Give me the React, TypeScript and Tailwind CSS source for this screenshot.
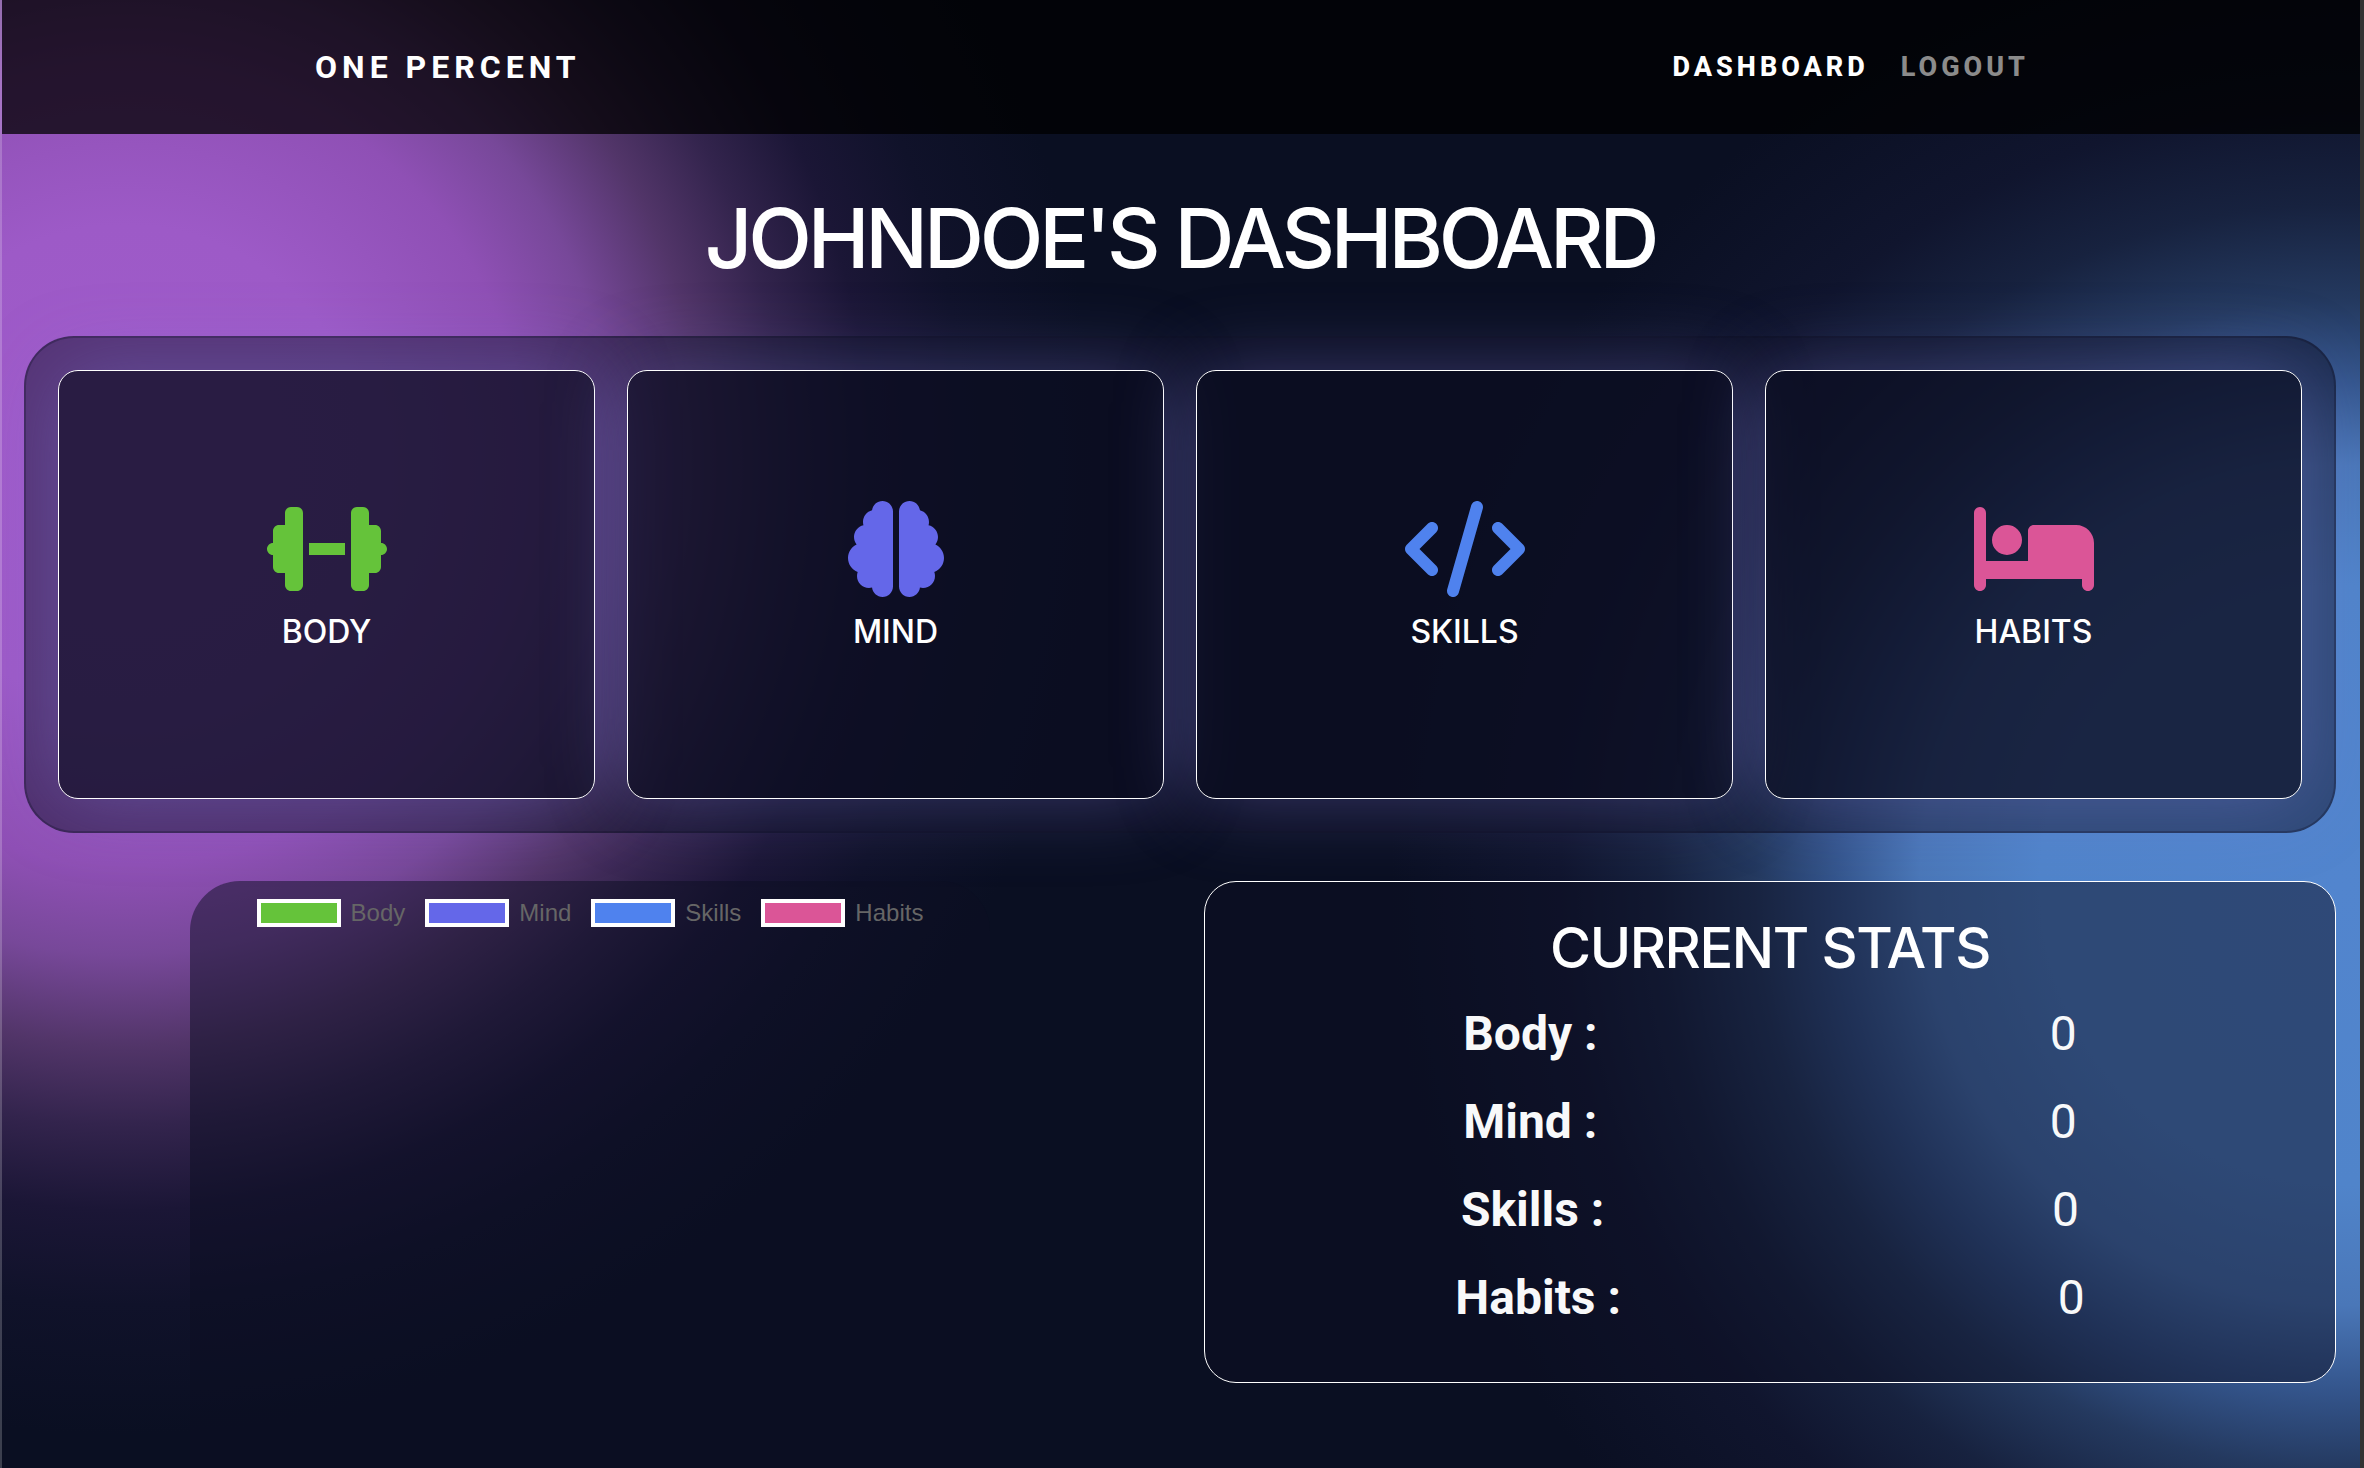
import { FaDumbbell, FaBrain, FaCode, FaBed } from "react-icons/fa6";
import type { IconType } from "react-icons";

type Area = { name: string; Icon: IconType; text: string; fill: string; value: number };

const areas: Area[] = [
  { name: "Body", Icon: FaDumbbell, text: "text-[#65c33a]", fill: "bg-[#65c33a]", value: 0 },
  { name: "Mind", Icon: FaBrain, text: "text-[#6467e9]", fill: "bg-[#6467e9]", value: 0 },
  { name: "Skills", Icon: FaCode, text: "text-[#4f82ee]", fill: "bg-[#4f82ee]", value: 0 },
  { name: "Habits", Icon: FaBed, text: "text-[#db5597]", fill: "bg-[#db5597]", value: 0 },
];

function Navbar() {
  return (
    <header className="bg-black/75">
      <nav className="mx-auto flex h-[134px] w-[1736px] max-w-full items-center justify-between pr-5 pl-0.5 font-['Roboto']">
        <a href="#home" className="text-[32px] font-bold tracking-[5px] text-white">
          ONE PERCENT
        </a>
        <div className="flex gap-8 text-[27px] font-extrabold tracking-[4px]">
          <a href="#dashboard" className="text-white">
            DASHBOARD
          </a>
          <a href="#logout" className="text-[#8b8b8b]">
            LOGOUT
          </a>
        </div>
      </nav>
    </header>
  );
}

function AreaCard({ area }: { area: Area }) {
  const { Icon } = area;
  return (
    <button
      type="button"
      className="flex h-[429px] flex-col items-center justify-center gap-2 rounded-[20px] border border-white bg-[#0c0d22]/60 pb-2.5 shadow-[0_0_80px_rgba(130,125,220,0.38)]"
    >
      <Icon aria-hidden="true" className={`h-24 w-30 ${area.text}`} />
      <span className="text-[32px] leading-[54px] font-medium text-white uppercase">{area.name}</span>
    </button>
  );
}

function Legend() {
  return (
    <ul className="flex justify-center gap-5 pt-[18px] font-['Liberation_Sans'] text-2xl text-[#666666]">
      {areas.map((a) => (
        <li key={a.name} className="flex items-center gap-[10px] leading-7">
          <span className={`h-7 w-[84px] border-4 border-white ${a.fill}`} />
          {a.name}
        </li>
      ))}
    </ul>
  );
}

function Stats() {
  return (
    <section className="h-[502px] rounded-[32px] border border-white bg-[#0c0d22]/50 px-8 pt-8 text-center">
      <h2 className="text-[56px] leading-[68px] font-medium tracking-tight text-white">CURRENT STATS</h2>
      <dl className="pt-2 font-['Roboto'] text-5xl text-[#f8f9fa]">
        {areas.map((a) => (
          <div key={a.name} className="flex h-[88px] items-center justify-around">
            <dt className="font-bold">{a.name} :</dt>
            <dd>{a.value}</dd>
          </div>
        ))}
      </dl>
    </section>
  );
}

export default function App() {
  return (
    <div className="min-h-screen overflow-hidden border-r-4 border-l-2 border-r-[#333333] border-l-white/20 bg-[#0a0f22] bg-[radial-gradient(circle_at_125px_465px,#a05bcb_0px,#9d5ac7_240px,#8f50b5_400px,#774899_490px,#523569_580px,#33244d_660px,#1b1636_745px,#10122a_840px,transparent_970px),radial-gradient(circle_at_2340px_885px,#5285ce_0px,#5084ca_300px,#4a77b8_420px,#34558c_505px,#24395f_585px,#17223f_680px,#10152e_780px,transparent_950px)] bg-origin-border font-['Inter']">
      <Navbar />
      <main className="pr-6 pl-[22px]">
        <h1 className="pt-[54px] text-center text-[83px] leading-[100px] font-medium tracking-tighter text-white">
          JOHNDOE'S DASHBOARD
        </h1>
        <section className="mt-12 grid grid-cols-4 gap-8 rounded-[50px] border-2 border-[#0a0c1e]/30 bg-[#0c0d22]/50 p-8">
          {areas.map((a) => (
            <AreaCard key={a.name} area={a} />
          ))}
        </section>
        <div className="mt-12 grid grid-cols-2 gap-12">
          <section aria-label="Progress chart" className="mx-auto h-[587px] w-[800px] rounded-t-[50px] bg-[#0c0d22]/50">
            <Legend />
          </section>
          <Stats />
        </div>
      </main>
    </div>
  );
}
